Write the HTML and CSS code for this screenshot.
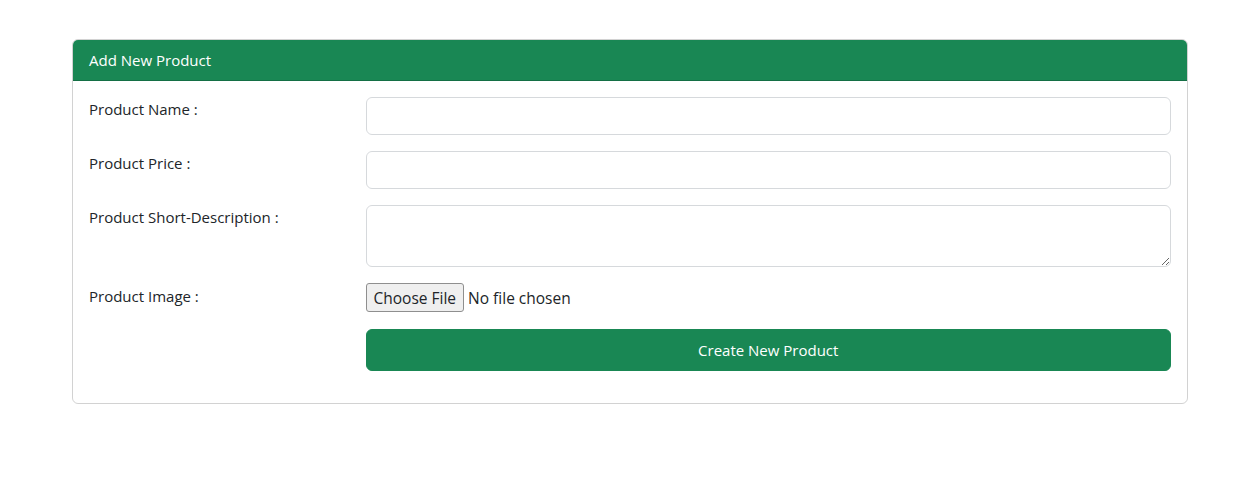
FILE: index.html
```html
<!DOCTYPE html>
<html lang="en">
<head>
<meta charset="utf-8">
<title>Add New Product</title>
<link rel="stylesheet" href="styles.css">
</head>
<body>
<div class="page">
  <div class="card">
    <div class="card-header">Add New Product</div>
    <form class="card-body">
      <div class="form-row">
        <label class="form-label" for="name">Product Name :</label>
        <input class="form-control" type="text" id="name">
      </div>
      <div class="form-row">
        <label class="form-label" for="price">Product Price :</label>
        <input class="form-control" type="text" id="price">
      </div>
      <div class="form-row">
        <label class="form-label" for="desc">Product Short-Description :</label>
        <textarea class="form-control textarea" id="desc" rows="2"></textarea>
      </div>
      <div class="form-row">
        <label class="form-label file-label" for="img">Product Image :</label>
        <input class="file-input" type="file" id="img">
      </div>
      <div class="form-row">
        <span></span>
        <button class="btn-create" type="button">Create New Product</button>
      </div>
    </form>
  </div>
</div>
</body>
</html>
```

FILE: styles.css
```css
* { box-sizing: border-box; }
body {
  margin: 0;
  font-family: "Segoe UI", "Open Sans", "Noto Sans", sans-serif;
  font-size: 15px;
  line-height: 1.5;
  color: #212529;
  background: #fff;
}
.page {
  padding: 39px 51px 0 72px;
}
.card {
  width: 1116px;
  border: 1px solid rgba(0,0,0,0.175);
  border-radius: 6px;
  overflow: hidden;
}
.card-header {
  background: #198754;
  color: #fff;
  padding: 8px 16px;
  height: 41px;
  line-height: 24px;
  border-bottom: 1px solid rgba(0,0,0,0.175);
}
.card-body {
  padding: 16px 16px 16px;
  margin: 0;
}
.form-row {
  display: grid;
  grid-template-columns: calc(25% - 18px) 1fr;
  column-gap: 24px;
  margin-bottom: 16px;
}
.form-label {
  line-height: 24px;
}
.file-label {
  padding-top: 1px;
}
.form-control {
  display: block;
  width: 100%;
  height: 38px;
  border: 1px solid #d6d9dc;
  border-radius: 6px;
  padding: 6px 12px;
  font: inherit;
  font-size: 16px;
  color: #212529;
  background: #fff;
}
.textarea {
  height: 62px;
  resize: vertical;
}
.file-input {
  font-family: inherit;
  font-size: 15.5px;
  color: #212529;
  height: 30px;
  line-height: 28px;
}
.file-input::file-selector-button {
  font-family: inherit;
  font-size: 15.5px;
  height: 29px;
  padding: 0 7px;
  margin-right: 4px;
  border: 1px solid #8f8f8f;
  border-radius: 3px;
  background: #efefef;
  color: #212529;
}
.btn-create {
  width: 100%;
  height: 42px;
  border: 1px solid #198754;
  border-radius: 6px;
  background: #198754;
  color: #fff;
  font: inherit;
  font-size: 15px;
  cursor: pointer;
}
```
